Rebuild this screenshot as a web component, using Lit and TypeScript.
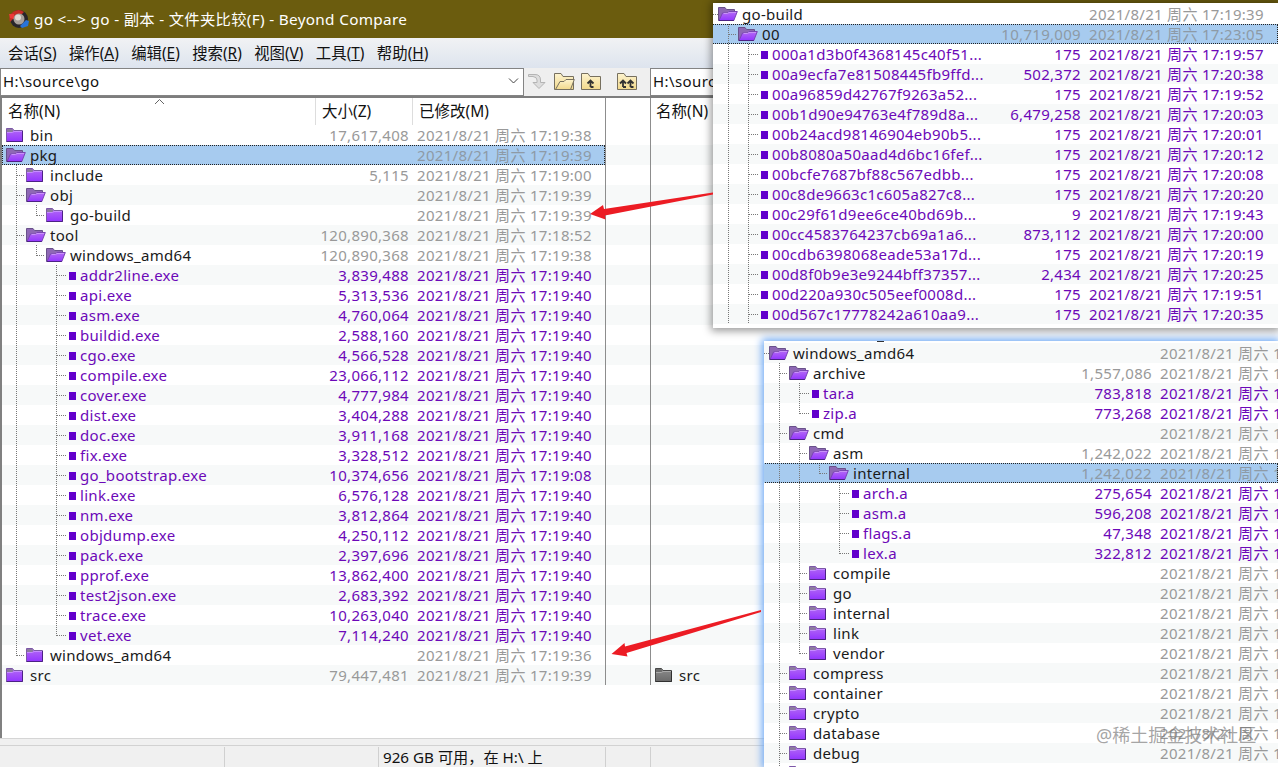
import { LitElement, html, svg, css, nothing } from "lit";
import { customElement, property } from "lit/decorators.js";

type Kind = "closed" | "open" | "file" | "gray";
interface Item {
  depth: number;
  kind: Kind;
  name: string;
  size: string;
  date: string;
  selected?: boolean;
}

const DAY = "2021/8/21 周六 ";
const row = (depth: number, kind: Kind, name: string, size = "", time = "", selected = false): Item => ({
  depth, kind, name, size, date: time ? DAY + time : "", selected,
});

const tools: [string, string, string][] = [
  ["addr2line.exe", "3,839,488", "17:19:40"],
  ["api.exe", "5,313,536", "17:19:40"],
  ["asm.exe", "4,760,064", "17:19:40"],
  ["buildid.exe", "2,588,160", "17:19:40"],
  ["cgo.exe", "4,566,528", "17:19:40"],
  ["compile.exe", "23,066,112", "17:19:40"],
  ["cover.exe", "4,777,984", "17:19:40"],
  ["dist.exe", "3,404,288", "17:19:40"],
  ["doc.exe", "3,911,168", "17:19:40"],
  ["fix.exe", "3,328,512", "17:19:40"],
  ["go_bootstrap.exe", "10,374,656", "17:19:08"],
  ["link.exe", "6,576,128", "17:19:40"],
  ["nm.exe", "3,812,864", "17:19:40"],
  ["objdump.exe", "4,250,112", "17:19:40"],
  ["pack.exe", "2,397,696", "17:19:40"],
  ["pprof.exe", "13,862,400", "17:19:40"],
  ["test2json.exe", "2,683,392", "17:19:40"],
  ["trace.exe", "10,263,040", "17:19:40"],
  ["vet.exe", "7,114,240", "17:19:40"],
];

const mainRows: Item[] = [
  row(0, "closed", "bin", "17,617,408", "17:19:38"),
  row(0, "open", "pkg", "", "17:19:39", true),
  row(1, "closed", "include", "5,115", "17:19:00"),
  row(1, "open", "obj", "", "17:19:39"),
  row(2, "closed", "go-build", "", "17:19:39"),
  row(1, "open", "tool", "120,890,368", "17:18:52"),
  row(2, "open", "windows_amd64", "120,890,368", "17:19:38"),
  ...tools.map(([n, s, t]) => row(3, "file", n, s, t)),
  row(1, "closed", "windows_amd64", "", "17:19:36"),
  row(0, "closed", "src", "79,447,481", "17:19:39"),
];

const cacheRows: Item[] = [
  row(0, "open", "go-build", "", "17:19:39"),
  row(1, "open", "00", "10,719,009", "17:23:05", true),
  row(2, "file", "000a1d3b0f4368145c40f51...", "175", "17:19:57"),
  row(2, "file", "00a9ecfa7e81508445fb9ffd...", "502,372", "17:20:38"),
  row(2, "file", "00a96859d42767f9263a52...", "175", "17:19:52"),
  row(2, "file", "00b1d90e94763e4f789d8a...", "6,479,258", "17:20:03"),
  row(2, "file", "00b24acd98146904eb90b5...", "175", "17:20:01"),
  row(2, "file", "00b8080a50aad4d6bc16fef...", "175", "17:20:12"),
  row(2, "file", "00bcfe7687bf88c567edbb...", "175", "17:20:08"),
  row(2, "file", "00c8de9663c1c605a827c8...", "175", "17:20:20"),
  row(2, "file", "00c29f61d9ee6ce40bd69b...", "9", "17:19:43"),
  row(2, "file", "00cc4583764237cb69a1a6...", "873,112", "17:20:00"),
  row(2, "file", "00cdb6398068eade53a17d...", "175", "17:20:19"),
  row(2, "file", "00d8f0b9e3e9244bff37357...", "2,434", "17:20:25"),
  row(2, "file", "00d220a930c505eef0008d...", "175", "17:19:51"),
  row(2, "file", "00d567c17778242a610aa9...", "175", "17:20:35"),
];

const pkgRows: Item[] = [
  row(0, "open", "windows_amd64", "", "1"),
  row(1, "open", "archive", "1,557,086", "1"),
  row(2, "file", "tar.a", "783,818", "1"),
  row(2, "file", "zip.a", "773,268", "1"),
  row(1, "open", "cmd", "", "1"),
  row(2, "open", "asm", "1,242,022", "1"),
  row(3, "open", "internal", "1,242,022", "1", true),
  row(4, "file", "arch.a", "275,654", "1"),
  row(4, "file", "asm.a", "596,208", "1"),
  row(4, "file", "flags.a", "47,348", "1"),
  row(4, "file", "lex.a", "322,812", "1"),
  ...["compile", "go", "internal", "link", "vendor"].map((n) => row(2, "closed", n, "", "1")),
  ...["compress", "container", "crypto", "database", "debug"].map((n) => row(1, "closed", n, "", "1")),
  row(1, "closed", ""),
];

const otherRows: Item[] = [
  ...Array.from({ length: 27 }, () => row(0, "file", "")),
  row(0, "gray", "src"),
];

const gradients = svg`<defs>
  <linearGradient id="p" x1="0" y1="0" x2="0" y2="1"><stop offset="0" stop-color="#b56cf4"/><stop offset="1" stop-color="#9335ff"/></linearGradient>
  <linearGradient id="g" x1="0" y1="0" x2="0" y2="1"><stop offset="0" stop-color="#8c8c8c"/><stop offset="1" stop-color="#6a6a6a"/></linearGradient>
  <linearGradient id="y" x1="0" y1="0" x2="0" y2="1"><stop offset="0" stop-color="#fdf3cf"/><stop offset="1" stop-color="#f2d98b"/></linearGradient>
</defs>`;

function folderIcon(kind: Kind) {
  if (kind === "open") {
    return html`<svg class="folder" width="20" height="16" viewBox="0 0 20 16">${gradients}
      <path d="M.5 14.5V1.5H7L8.5 3.5H16.500V7L13.500 14.500Z" fill="#8e68b4" stroke="#69518a"/>
      <path d="M1 14.500L4.500 7H9.500L11 5.500H19.300L15.800 14.500Z" fill="url(#p)" stroke="#7a45b4"/>
      <path d="M1 14.500H15.800" stroke="#4c2185"/>
      <path d="M5.500 7.500H9.500L11 6.500H18" fill="none" stroke="#c892f8"/>
    </svg>`;
  }
  const gray = kind === "gray";
  return html`<svg class="folder" width="20" height="16" viewBox="0 0 20 16">${gradients}
    <path d="M.5 14.500V1.500H6.500L8 3.500H16.500V14.500Z" fill="${gray ? "url(#g)" : "url(#p)"}" stroke="${gray ? "#484848" : "#7d58a8"}"/>
    <path d="M1 2H6.300L7.500 3.800L6 5.200H1Z" fill="${gray ? "#6c6c6c" : "#8c7b9e"}"/>
    <path d="M1 5.500H6.500L8 4.500H16" fill="none" stroke="${gray ? "#aaa" : "#c58cff"}"/>
    <path d="M.500 14.500H16.500V4" fill="none" stroke="${gray ? "#303030" : "#4c2185"}"/>
  </svg>`;
}

@customElement("folder-tree")
class FolderTree extends LitElement {
  @property({ attribute: false }) items: Item[] = [];
  @property({ attribute: false }) openLevels: number[] = [];
  @property({ type: Boolean }) stub = false;

  static styles = css`
    :host { display: block; }
    .row {
      display: grid;
      grid-template-columns: minmax(0, 1fr) 110px var(--date-col, 188px);
      height: 20px;
      line-height: 20px;
      box-sizing: border-box;
      white-space: nowrap;
      overflow: hidden;
      position: relative;
      color: #1a1a1a;
    }
    .row:nth-child(even) { background: var(--even, #f7f9f9); }
    .row:nth-child(odd) { background: var(--odd, #fff); }
    .row.selected { background: #a7cbef; }
    .row.selected::after {
      content: "";
      position: absolute;
      inset: 0;
      border: 1px dotted #222;
    }
    .name { display: flex; min-width: 0; margin-left: var(--indent, 0); }
    .guides { flex: none; display: block; }
    .folder { flex: none; margin: 2px 4px 0 0; }
    .square { flex: none; width: 7px; height: 8px; margin: 7px 4px 0 3px; background: #6200cc; }
    .size { text-align: right; }
    .date { padding-left: 8px; overflow: hidden; }
    .size, .date { color: #999; }
    .file, .file .size, .file .date { color: #6c08b8; }
    .selected .size, .selected .date { color: #8d9aa6; }
  `;

  continues(index: number, level: number) {
    for (let i = index + 1; i < this.items.length; i++) {
      if (this.items[i].depth < level) return false;
      if (this.items[i].depth === level) return true;
    }
    return this.openLevels.includes(level);
  }

  guides(index: number) {
    const { depth, kind } = this.items[index];
    const width = 6 + depth * 20;
    const lines = [];
    for (let level = 1; level <= depth; level++) {
      const x = level * 20 - 3.5;
      const more = this.continues(index, level);
      if (more || level === depth) lines.push(svg`<path d="M${x} 0V${more ? 20 : 11}"/>`);
    }
    if (depth > 0) lines.push(svg`<path d="M${depth * 20 - 3} 10.500H${width + (kind === "file" ? 1 : -1)}"/>`);
    else if (this.stub) lines.push(svg`<path d="M1 10.500H6"/>`);
    return html`<svg class="guides" width="${width}" height="20" overflow="visible">
      <g fill="none" stroke="#777" stroke-dasharray="1 1">${lines}</g></svg>`;
  }

  render() {
    return this.items.map((item, i) => html`
      <div class="row ${item.kind} ${item.selected ? "selected" : ""}">
        <div class="name">
          ${this.guides(i)}
          ${item.kind !== "file" ? folderIcon(item.kind) : item.name ? html`<span class="square"></span>` : nothing}
          <span>${item.name}</span>
        </div>
        <div class="size">${item.size}</div>
        <div class="date">${item.date}</div>
      </div>`);
  }
}

const menus = [["会话", "S"], ["操作", "A"], ["编辑", "E"], ["搜索", "R"], ["视图", "V"], ["工具", "T"], ["帮助", "H"]];

const upArrow = (x: number) => svg`<path d="M${x} 14V8.500M${x - 3} 10.500L${x} 7.500L${x + 3} 10.500M${x} 14H${x + 3}" fill="none" stroke="#333" stroke-width="1.800"/>`;
const yellowFolder = (content: unknown) => html`<svg class="yellow" width="21" height="18" viewBox="0 0 21 18">${gradients}
  <path d="M.500 16.500V.500H7L9 3.500H19.500V16.500Z" fill="url(#y)" stroke="#77705f"/>${content}</svg>`;

@customElement("app-root")
class AppRoot extends LitElement {
  static styles = css`
    :host {
      display: block;
      position: relative;
      width: 1278px;
      height: 767px;
      overflow: hidden;
      background: #fff;
      font: 15px/20px "Noto Sans", "Noto Sans CJK SC", sans-serif;
      letter-spacing: 0.3px;
      color: #111;
      white-space: nowrap;
    }
    .window { display: flex; flex-direction: column; height: 767px; }
    .title {
      display: flex;
      align-items: center;
      gap: 5px;
      height: 38px;
      box-sizing: border-box;
      padding-left: 8px;
      background: #6b5c0e;
      color: #fff;
      font-size: 15.3px;
      letter-spacing: 0.32px;
    }
    .menu {
      display: flex;
      gap: 12.4px;
      height: 30px;
      box-sizing: border-box;
      padding: 6px 0 0 8px;
      background: linear-gradient(#f1f2f4, #dde4ee);
      font-size: 15.4px;
      letter-spacing: 0;
    }
    .toolbar {
      display: flex;
      height: 30px;
      box-sizing: border-box;
      border-bottom: 2px solid #7d7d7d;
      background: #efefef;
    }
    .path {
      display: flex;
      justify-content: space-between;
      align-items: center;
      width: 524px;
      height: 28px;
      box-sizing: border-box;
      border: 1px solid #848484;
      padding: 0 4px 2px 2px;
      background: #fff;
      letter-spacing: 0.4px;
    }
    .path.second { width: 300px; margin-left: 12px; }
    .tools { display: flex; align-items: center; gap: 6px; padding-left: 4px; }
    .yellow { display: block; }
    .gap { margin-left: 9px; }
    .panes { display: flex; height: 587px; border-left: 2px solid #808080; box-sizing: border-box; }
    .pane { width: 603px; }
    .middle { width: 44px; border: 1px solid #8d8d8d; border-width: 0 1px; }
    .other { flex: 1; }
    .other folder-tree { --indent: -2px; }
    .other .head { margin-left: -1px; }
    .head { display: flex; height: 27px; line-height: 27px; box-sizing: border-box; letter-spacing: 0; font-size: 15.5px; }
    .head div { box-sizing: border-box; padding-left: 6px; border-right: 1px solid #ddd; }
    .head .c1 { display: flex; width: 314px; }
    .head .c2 { width: 97px; }
    .head .c3 { border: 0; }
    .sort { margin-left: 94px; }
    .bands { height: 560px; background: repeating-linear-gradient(#fff 0 20px, #f7f9f9 20px 40px); }
    .blank { flex: 1; background: #fff; border-left: 2px solid #808080; }
    .edge { height: 6px; background: #f0f0f0; border-top: 1px solid #d5d5d5; }
    .status {
      display: flex;
      height: 22px;
      box-sizing: border-box;
      border-top: 1px solid #d2d2d2;
      background: #f0f0f0;
      letter-spacing: 0;
      font-size: 15.2px;
    }
    .status div { box-sizing: border-box; border-right: 1px solid #d0d0d0; margin-top: 1px; }
    .s1 { width: 225px; }
    .s2 { width: 154px; }
    .s3 { width: 227px; padding-left: 4px; line-height: 20px; }
    .s4 { width: 45px; }
    .float { position: absolute; box-sizing: border-box; background: #fff; overflow: hidden; }
    .cache {
      left: 713px; top: 3px; width: 565px; height: 325px;
      padding-top: 1px;
      box-shadow: 0 1px 8px 2px #0006;
    }
    .cache folder-tree { margin-left: -1px; --date-col: 197px; }
    .packages {
      left: 764px; top: 341px; width: 514px; height: 426px;
      padding-top: 2px;
      box-shadow: 0 0 8px 2px #6aa7f5;
    }
    .packages folder-tree { margin-left: -1px; --date-col: 126px; --odd: #f7f9f9; --even: #fff; }
    .pane folder-tree { --date-col: 196px; --indent: -2px; }
    .dash { position: absolute; left: 113px; top: 0; width: 7px; height: 1px; background: #333; }
    .arrows { position: absolute; left: 0; top: 0; pointer-events: none; }
    .mark {
      position: absolute;
      left: 1096px;
      top: 723px;
      font-size: 18px;
      line-height: 24px;
      letter-spacing: 0;
      color: #777a;
    }
  `;

  render() {
    return html`
      <div class="window">
        <div class="title">
          <svg width="21" height="21" viewBox="0 0 21 21">
            <circle cx="11" cy="10" r="9" fill="#28252a"/>
            <path d="M2 13A9 9 0 0 1 16 3L13 6L7 8Z" fill="#c62c26"/>
            <path d="M1 5L6 5L6 10L2 9Z" fill="#ed3939"/>
            <path d="M12 17L18 11L21 12L20 17L14 19Z" fill="#2874d8"/>
            <circle cx="11" cy="10" r="5.500" fill="#a8a09a"/>
            <circle cx="10" cy="8.500" r="3" fill="#dfdbd5"/>
          </svg>
          <span>go &lt;--&gt; go - 副本 - 文件夹比较(F) - Beyond Compare</span>
        </div>
        <div class="menu">${menus.map(([t, k]) => html`<span>${t}(<u>${k}</u>)</span>`)}</div>
        <div class="toolbar">
          <div class="path"><span>H:\\source\\go</span>
            <svg width="11" height="8" viewBox="0 0 11 8"><path d="M1 1.500L5.500 6L10 1.500" fill="none" stroke="#444"/></svg>
          </div>
          <div class="tools">
            <svg width="20" height="18" viewBox="0 0 20 18"><path d="M.500 3.500V1.500H7Q12.500 1.500 12.500 7V9.500H17L11 15.500L5 9.500H9V7Q9 4 5 3.500Z" fill="#ddd" stroke="#b4b4b4"/></svg>
            ${yellowFolder(svg`<path d="M1.500 16.500L6 8.500H10L12 6.500H20.300L16.500 16.500Z" fill="url(#y)" stroke="#77705f"/>`)}
            ${yellowFolder(upArrow(9.5))}
            <span class="gap">${yellowFolder(svg`${upArrow(6)}${upArrow(13.5)}`)}</span>
          </div>
          <div class="path second"><span>H:\\source\\go</span></div>
        </div>
        <div class="panes">
          <div class="pane">
            <div class="head">
              <div class="c1">名称(N)<svg class="sort" width="11" height="8" viewBox="0 0 11 8"><path d="M1 6L5.500 1.500L10 6" fill="none" stroke="#666"/></svg></div>
              <div class="c2">大小(Z)</div>
              <div class="c3">已修改(M)</div>
            </div>
            <folder-tree .items=${mainRows}></folder-tree>
          </div>
          <div class="middle"><div class="head"></div><div class="bands"></div></div>
          <div class="other"><div class="head"><div class="c1">名称(N)</div></div>
            <folder-tree .items=${otherRows}></folder-tree>
          </div>
        </div>
        <div class="blank"></div>
        <div class="edge"></div>
        <div class="status"><div class="s1"></div><div class="s2"></div><div class="s3">926 GB 可用，在 H:\\ 上</div><div class="s4"></div></div>
      </div>

      <div class="float packages"><span class="dash"></span>
        <folder-tree stub .items=${pkgRows} .openLevels=${[1]}></folder-tree>
      </div>
      <div class="float cache">
        <folder-tree stub .items=${cacheRows} .openLevels=${[1, 2]}></folder-tree>
      </div>
      <svg class="arrows" width="1278" height="767" viewBox="0 0 1278 767" fill="#ec1c24">
        <path d="M713 192.500L604 209L603 205L590 214L605.500 219.500L605 215.500L713 194.500Z"/>
        <path d="M761 610L625 646.500L624.500 643L611.500 654L627.500 656.500L626.500 653L761 612Z"/>
      </svg>
      <div class="mark">@稀土掘金技术社区</div>
    `;
  }
}
